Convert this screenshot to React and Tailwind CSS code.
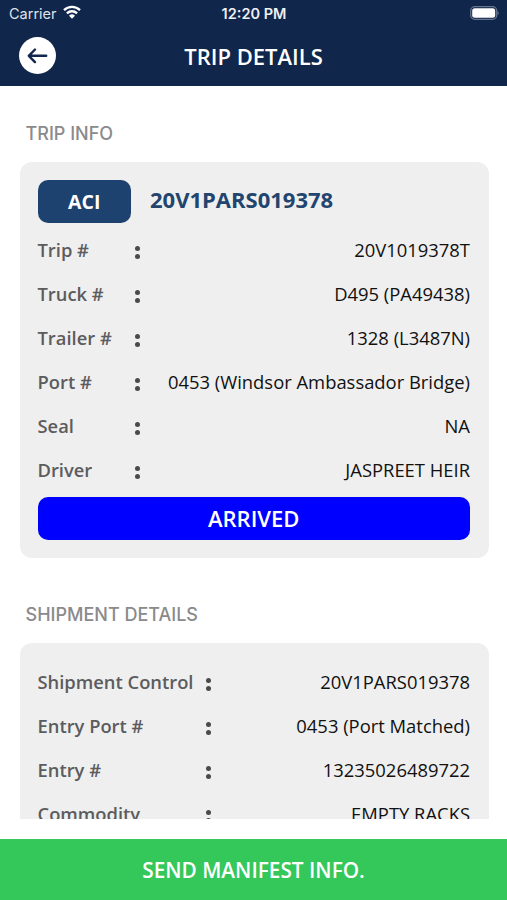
const tripInfo = [
  { label: "Trip #", value: "20V1019378T" },
  { label: "Truck #", value: "D495 (PA49438)" },
  { label: "Trailer #", value: "1328 (L3487N)" },
  { label: "Port #", value: "0453 (Windsor Ambassador Bridge)" },
  { label: "Seal", value: "NA" },
  { label: "Driver", value: "JASPREET HEIR" },
];

const shipmentDetails = [
  { label: "Shipment Control", value: "20V1PARS019378" },
  { label: "Entry Port #", value: "0453 (Port Matched)" },
  { label: "Entry #", value: "13235026489722" },
  { label: "Commodity", value: "EMPTY RACKS" },
];

const Row = ({ label, value, labelWidth }) => (
  <div className="flex h-11 items-center text-[18.4px] whitespace-nowrap">
    <span className={`${labelWidth} text-[18.35px] font-semibold text-[#5c5c5e]`}>{label}</span>
    <span className="flex flex-col gap-[3.5px] pt-[5px]">
      <span className="size-[5px] rounded-full bg-[#4a4a4c]" />
      <span className="size-[5px] rounded-full bg-[#4a4a4c]" />
    </span>
    <span className="flex-1 text-right text-[#111]">{value}</span>
  </div>
);

const SectionTitle = ({ children }) => (
  <h2 className="ml-1.5 pt-px font-['Inter',sans-serif] text-[18px] leading-[27px] font-medium text-[#8a8a8c]">
    {children}
  </h2>
);

const App = () => {
  return (
    <div className="flex h-[900px] w-[507px] flex-col overflow-hidden bg-white font-['Open_Sans',sans-serif]">
      <header className="h-[86px] bg-[#10264b] text-white">
        {/* Status bar */}
        <div className="grid h-7 grid-cols-3 items-center pr-2 pl-[9px] font-['Inter',sans-serif] text-sm">
          <div className="flex items-center gap-1.5">
            <span className="text-[14.5px] text-[#dfe3ea]">Carrier</span>
            <svg className="-mt-1" width="18" height="14" viewBox="0 0 18 14" fill="none" stroke="#fff" strokeWidth="2.3">
              <path d="M1 5.1a11.5 11.5 0 0 1 16 0" />
              <path d="M3.9 8.3a7.4 7.4 0 0 1 10.2 0" />
              <path d="M9 13.7 6 10.7a4.3 4.3 0 0 1 6 0Z" fill="#fff" stroke="none" />
            </svg>
          </div>
          <span className="text-center text-[14.5px] font-semibold text-[#eef0f4]">12:20 PM</span>
          <svg className="-mt-0.5 ml-auto" width="29" height="14" viewBox="0 0 29 14">
            <rect x="0.7" y="0.7" width="26" height="12.6" rx="4" fill="none" stroke="#66748e" strokeWidth="1.3" />
            <rect x="2.2" y="2.2" width="23" height="9.6" rx="2.5" fill="#fff" />
            <path d="M27.5 5v4q1.3-.6 1.3-2t-1.3-2Z" fill="#66748e" />
          </svg>
        </div>
        <div className="grid h-14 grid-cols-[56px_1fr_56px] items-center">
          <button className="-mt-px ml-[19px] flex size-[37px] items-center justify-center rounded-full bg-white" type="button">
            <svg width="21" height="17" viewBox="0 0 21 17" fill="none" stroke="#10264b" strokeWidth="2.4" strokeLinecap="round" strokeLinejoin="round">
              <path d="M19.2 8.8H1.8M8 2.5 1.8 8.8 8 15.1" />
            </svg>
          </button>
          <h1 className="text-center text-[22px] font-semibold">TRIP DETAILS</h1>
        </div>
      </header>

      <main className="h-[733px] overflow-hidden pt-[33px] pr-[18.5px] pl-[19.5px]">
        <SectionTitle>TRIP INFO</SectionTitle>
        <section className="mt-[15px] h-[396px] rounded-xl bg-[#efefef] pt-[18px] pr-[18.5px] pl-[18px]">
          <div className="flex h-[43px] gap-[19px]">
            <span className="flex w-[93.5px] items-center justify-center rounded-[10px] bg-[#1e426f] pt-px text-[19.5px] font-bold text-white">
              ACI
            </span>
            <span className="pt-1 text-[22px] leading-[30px] font-bold text-[#21456e]">20V1PARS019378</span>
          </div>
          <div className="mt-[5px]">
            {tripInfo.map((item) => (
              <Row key={item.label} {...item} labelWidth="w-[97px]" />
            ))}
          </div>
          <button className="mt-[5px] h-[43px] w-full rounded-[10px] bg-[#0000ff] text-[22px] font-semibold text-white" type="button">
            ARRIVED
          </button>
        </section>

        <div className="mt-[42px]">
          <SectionTitle>SHIPMENT DETAILS</SectionTitle>
        </div>
        <section className="mt-[15px] h-[300px] rounded-xl bg-[#efefef] pt-[17px] pr-[18.5px] pl-[18px]">
          {shipmentDetails.map((item) => (
            <Row key={item.label} {...item} labelWidth="w-[168px]" />
          ))}
        </section>
      </main>

      <button className="mt-5 h-[61px] w-full bg-[#34c759] pt-0.5 text-[20.8px] font-semibold text-white" type="button">
        SEND MANIFEST INFO.
      </button>
    </div>
  );
};

export default App;
